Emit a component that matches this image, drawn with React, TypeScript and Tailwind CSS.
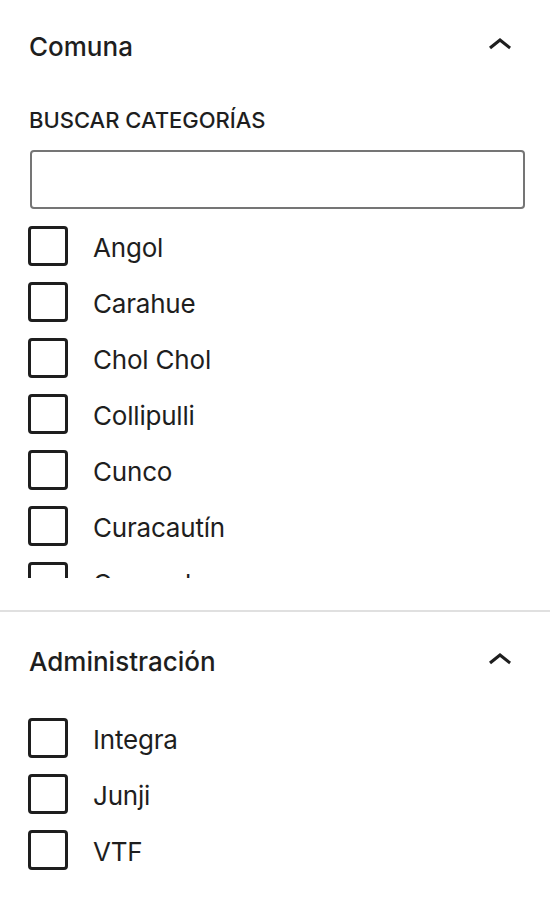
import React from "react";

const comunas = ["Angol", "Carahue", "Chol Chol", "Collipulli", "Cunco", "Curacautín", "Curarrehue", "Ercilla", "Freire"];
const admins = ["Integra", "Junji", "VTF"];

function ChevronUp() {
  return (
    <svg viewBox="0 0 24 24" className="h-12 w-12" fill="#1e1e1e">
      <path d="M6.5 12.4L12 8l5.5 4.4-.9 1.2L12 10l-4.5 3.6-1-1.2z" />
    </svg>
  );
}

function PanelHeader({ title }: { title: string }) {
  return (
    <div className="flex h-16 items-center justify-between pl-[29px] pr-[26px]">
      <h2 className="pt-[2px] text-[26px] font-medium leading-none">{title}</h2>
      <ChevronUp />
    </div>
  );
}

function CheckRow({ label }: { label: string }) {
  return (
    <label className="flex h-14 items-center gap-[25px]">
      <span className="h-10 w-10 shrink-0 rounded-[4px] border-[3px] border-[#1e1e1e] bg-white" />
      <span className="pt-1 text-[26px] leading-none tracking-[-0.2px]">{label}</span>
    </label>
  );
}

export default function App() {
  return (
    <div className="w-[550px] bg-white font-['Inter','Liberation_Sans',sans-serif] text-[#1e1e1e]">
      <section className="pt-[14px] pb-[31px]">
        <PanelHeader title="Comuna" />
        <div className="px-[28px]">
          <div className="mt-[26px] pl-[1px] text-[22px] font-medium uppercase leading-8">Buscar categorías</div>
          <input
            type="text"
            className="mt-[14px] ml-[2px] block h-[59px] w-[495px] rounded-[4px] border-2 border-[#757575] bg-white px-4 text-[26px] outline-none"
          />
          <div className="mt-[9px] max-h-[360px] overflow-hidden">
            {comunas.map((c) => (
              <CheckRow key={c} label={c} />
            ))}
          </div>
        </div>
      </section>
      <div className="mt-px border-t-2 border-[#e0e0e0]" />
      <section className="pt-[17px] pb-8">
        <PanelHeader title="Administración" />
        <div className="mt-[17px] px-[28px]">
          {admins.map((a) => (
            <CheckRow key={a} label={a} />
          ))}
        </div>
      </section>
    </div>
  );
}
